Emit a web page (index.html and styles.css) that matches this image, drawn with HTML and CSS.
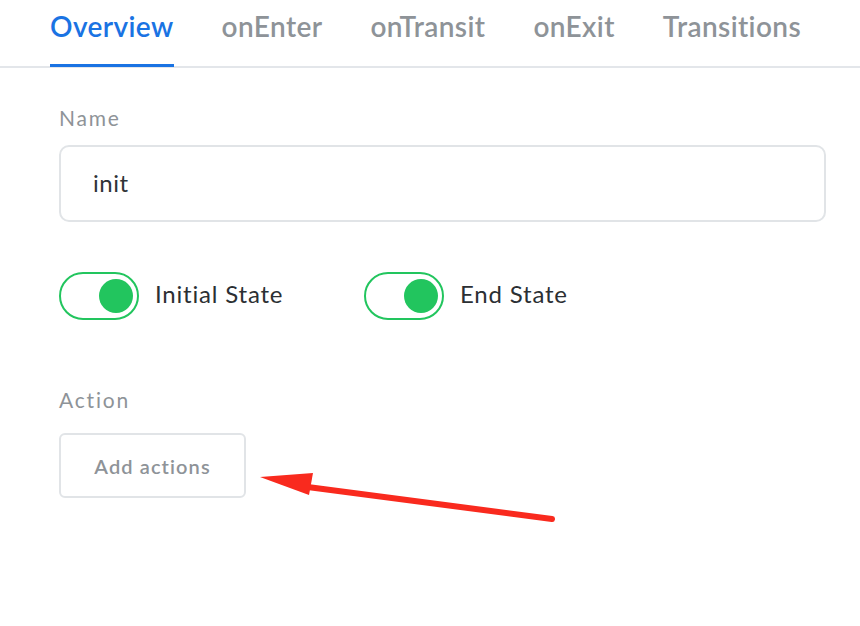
FILE: index.html
```html
<!DOCTYPE html>
<html>
<head>
<meta charset="utf-8">
<link rel="stylesheet" href="styles.css">
</head>
<body>
<div class="page">
  <nav class="tabs">
    <div class="tab active">Overview</div>
    <div class="tab">onEnter</div>
    <div class="tab">onTransit</div>
    <div class="tab">onExit</div>
    <div class="tab">Transitions</div>
  </nav>
  <div class="content">
    <div class="label">Name</div>
    <div class="input">init</div>
    <div class="toggles">
      <div class="toggle-item"><span class="switch"><span class="knob"></span></span><span class="toggle-label">Initial State</span></div>
      <div class="toggle-item"><span class="switch"><span class="knob"></span></span><span class="toggle-label">End State</span></div>
    </div>
    <div class="label action-label">Action</div>
    <button class="add-btn">Add actions</button>
  </div>
  <svg class="arrow" width="860" height="626" viewBox="0 0 860 626">
    <line x1="552" y1="519" x2="300" y2="486" stroke="#f92a1e" stroke-width="6" stroke-linecap="round"/>
    <polygon points="260,477 313,473 309,495" fill="#f92a1e"/>
  </svg>
</div>
</body>
</html>
```
FILE: styles.css
```css
* { box-sizing: border-box; }
html, body { margin: 0; padding: 0; background: #fff; }
body { font-family: Lato, "Open Sans", sans-serif; }
.page { position: relative; width: 860px; height: 626px; overflow: hidden; }
.tabs {
  display: flex;
  gap: 48px;
  padding-left: 50px;
  border-bottom: 2px solid #e3e6ea;
  height: 68px;
}
.tab {
  font-size: 28px;
  font-weight: 600;
  color: #8e9398;
  padding-top: 9px;
  height: 67px;
  letter-spacing: 0.4px;
}
.tab.active {
  color: #1a73e3;
  border-bottom: 3px solid #1a73e3;
}
.content { padding: 36px 34px 0 59px; }
.label { font-size: 21px; color: #8e9398; line-height: 28px; letter-spacing: 1.8px; }
.input {
  margin-top: 13px;
  height: 77px;
  width: 767px;
  border: 2px solid #e1e4e7;
  border-radius: 10px;
  padding-left: 32px;
  font-size: 24px;
  letter-spacing: 0.5px;
  color: #2f3337;
  display: flex;
  align-items: center;
  padding-bottom: 2px;
}
.toggles { display: flex; gap: 0; margin-top: 50px; }
.toggle-item { display: flex; align-items: center; width: 305px; }
.switch {
  width: 80px;
  height: 48px;
  border: 2px solid #22c55e;
  border-radius: 24px;
  display: flex;
  align-items: center;
  justify-content: flex-end;
  padding-right: 4px;
}
.knob { width: 34px; height: 34px; border-radius: 50%; background: #22c55e; }
.toggle-label { margin-left: 16px; font-size: 24px; letter-spacing: 0.8px; color: #2b2f33; padding-bottom: 6px; }
.action-label { margin-top: 66px; }
.add-btn {
  margin-top: 19px;
  width: 187px;
  height: 65px;
  border: 2px solid #e1e4e7;
  border-radius: 6px;
  background: #fff;
  font-family: Lato, sans-serif;
  font-size: 20px;
  letter-spacing: 1.1px;
  font-weight: 600;
  color: #8e9398;
}
.arrow { position: absolute; left: 0; top: 0; pointer-events: none; }
```
